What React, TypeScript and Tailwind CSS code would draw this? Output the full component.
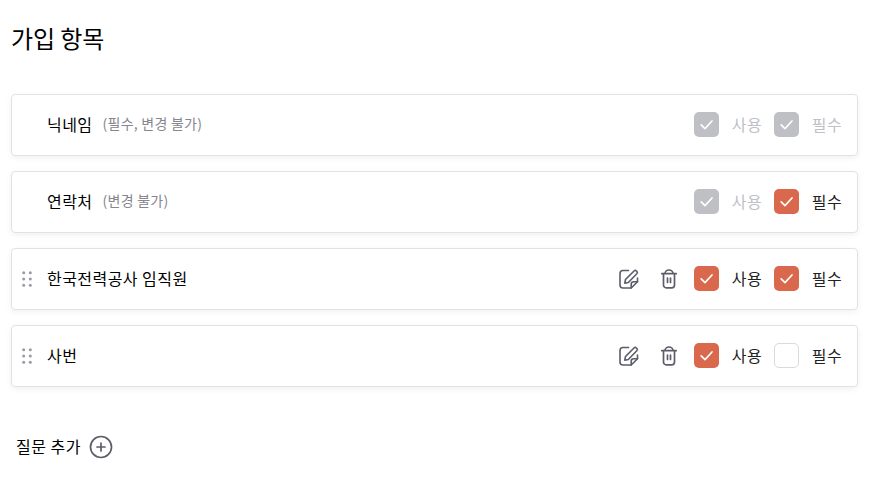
type Item = { name: string; note?: string; editable?: boolean; use: State; req: State };
type State = "on" | "off" | "disabled";

const items: Item[] = [
  { name: "닉네임", note: "(필수, 변경 불가)", use: "disabled", req: "disabled" },
  { name: "연락처", note: "(변경 불가)", use: "disabled", req: "on" },
  { name: "한국전력공사 임직원", editable: true, use: "on", req: "on" },
  { name: "사번", editable: true, use: "on", req: "off" },
];

const boxStyle: Record<State, string> = {
  on: "bg-[#da684c]",
  off: "border-[1.5px] border-[#dadade] bg-white",
  disabled: "bg-[#bfc0c6]",
};

function Check({ state, label }: { state: State; label: string }) {
  return (
    <div className="flex w-20 items-center gap-[12.400px]">
      <span className={"flex size-[25px] shrink-0 items-center justify-center rounded-[5px] " + boxStyle[state]}>
        {state !== "off" && (
          <svg width="25" height="25" viewBox="0 0 25 25" fill="none" stroke="white" strokeWidth="1.7" strokeLinecap="round" strokeLinejoin="round">
            <path d="M7.200 12.800L11 16.600L18 9" />
          </svg>
        )}
      </span>
      <span className={"whitespace-nowrap pb-[2px] text-[16px] tracking-[0.5px] " + (state === "disabled" ? "text-[#bfc0c6]" : "text-[#222]")}>{label}</span>
    </div>
  );
}

function Pencil() {
  return (
    <svg width="24" height="24" viewBox="0 0 24 24" fill="none" stroke="#5c5d69" strokeWidth="1.600" strokeLinecap="round" strokeLinejoin="round">
      <path d="M11.500 3.500H6a3 3 0 0 0-3 3V18a3 3 0 0 0 3 3h8.200L20.500 14.700V11" />
      <path d="M14.200 21V17.200a2.500 2.500 0 0 1 2.500-2.500h3.800" />
      <path d="M7.800 16.200l.7-3.700L17 4a1.700 1.700 0 0 1 2.400 0l.400.400a1.700 1.700 0 0 1 0 2.400L11.300 15.500z" />
    </svg>
  );
}

function Trash() {
  return (
    <svg width="24" height="24" viewBox="0 0 24 24" fill="none" stroke="#5c5d69" strokeWidth="1.700" strokeLinecap="round" strokeLinejoin="round">
      <path d="M4.800 6.700h14.400M8 6.500a4 3.500 0 0 1 8 0M6.500 7v11a2.800 2.800 0 0 0 2.800 2.800h5.400a2.800 2.800 0 0 0 2.800-2.800V7M10.500 11v4.500M13.500 11v4.500" />
    </svg>
  );
}

function Grip() {
  return (
    <svg width="10" height="16" viewBox="0 0 10 16" fill="#9a9aa5">
      {[1.7, 8, 14.3].map((y) => [1.7, 8.3].map((x) => <circle key={x + "-" + y} cx={x} cy={y} r="1.5" />))}
    </svg>
  );
}

export default function App() {
  return (
    <main className="h-[482px] w-[870px] bg-white pl-[11px] pr-3 pt-5 font-['Noto_Sans_CJK_KR',sans-serif] text-black">
      <h1 className="mb-[38px] text-[24px] leading-9 tracking-[-0.1px]">가입 항목</h1>
      <ul className="flex flex-col gap-[15px]">
        {items.map((it) => (
          <li key={it.name} className="flex h-[62px] items-center rounded-[4px] border border-[#e2e2e5] pl-[10px] pr-[2.700px] shadow-[0_2px_6px_rgba(0,0,0,0.06)]">
            <div className="w-[25px]">{it.editable && <Grip />}</div>
            <span className="pb-[2px] text-[16px] tracking-[0.45px]">{it.name}</span>
            {it.note && <span className="ml-[10px] pb-[3px] text-[14px] tracking-[0.25px] text-[#85868f]">{it.note}</span>}
            <div className="ml-auto flex items-center pb-px">
              {it.editable && (
                <div className="mr-[13px] flex gap-4">
                  <Pencil />
                  <Trash />
                </div>
              )}
              <Check state={it.use} label="사용" />
              <Check state={it.req} label="필수" />
            </div>
          </li>
        ))}
      </ul>
      <button className="ml-[5px] mt-[47px] flex items-center gap-2 text-[16px] leading-6 tracking-[0.5px]">
        <span className="pb-[2px]">질문 추가</span>
        <svg width="24" height="24" viewBox="0 0 24 24" fill="none" stroke="#5c5d69" strokeWidth="1.700" strokeLinecap="round">
          <circle cx="12" cy="12" r="10.500" />
          <path d="M12 8v8M8 12h8" />
        </svg>
      </button>
    </main>
  );
}
